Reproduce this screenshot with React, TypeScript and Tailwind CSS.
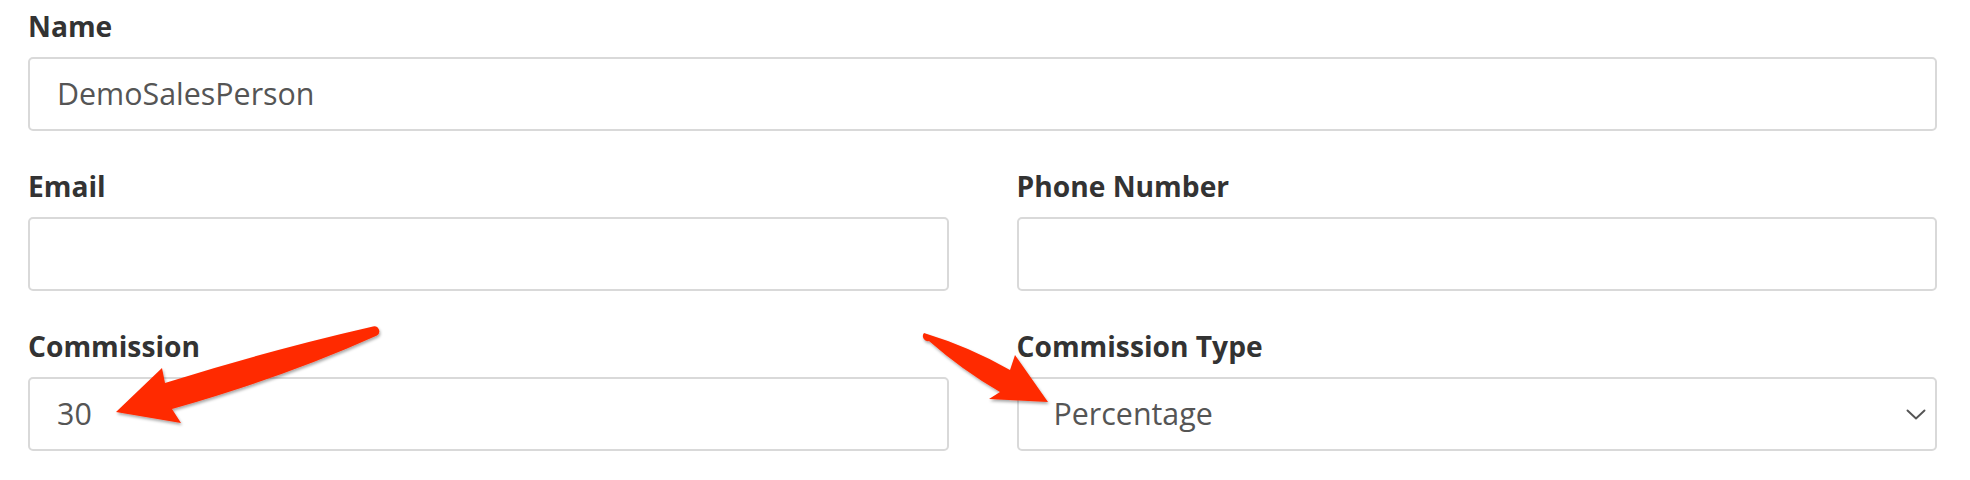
import React from "react";

function Label({ children }: { children: React.ReactNode }) {
  return (
    <div className="text-[28.2px] leading-[38px] font-bold text-[#333333] mb-[12px]">
      {children}
    </div>
  );
}

function Field({ value }: { value?: string }) {
  return (
    <div className="h-[74px] border-2 border-[#d9d9d9] rounded-[5px] bg-white flex items-center pl-[27px] text-[30.4px] text-[#555555]">
      {value}
    </div>
  );
}

export default function App() {
  return (
    <div className="relative w-full h-[480px] bg-white font-['Open_Sans',sans-serif] overflow-hidden">
      <div className="pl-[28px] pr-[33px] pt-[7px] flex flex-col gap-[36px]">
        <div>
          <Label>Name</Label>
          <Field value="DemoSalesPerson" />
        </div>
        <div className="grid grid-cols-2 gap-x-[68px]">
          <div>
            <Label>Email</Label>
            <Field />
          </div>
          <div>
            <Label>Phone Number</Label>
            <Field />
          </div>
        </div>
        <div className="grid grid-cols-2 gap-x-[68px]">
          <div>
            <Label>Commission</Label>
            <Field value="30" />
          </div>
          <div>
            <Label>Commission Type</Label>
            <div className="h-[74px] border-2 border-[#d9d9d9] rounded-[5px] bg-white flex items-center justify-between pl-[35px] pr-[9px] text-[30.4px] text-[#555555]">
              <span>Percentage</span>
              <svg width="20" height="11" viewBox="0 0 20 11" className="mt-[1px]">
                <polyline points="1.5,1.5 10,9.5 18.5,1.5" fill="none" stroke="#555555" strokeWidth="1.9" strokeLinecap="round" strokeLinejoin="round" />
              </svg>
            </div>
          </div>
        </div>
      </div>

      <svg
        className="absolute inset-0 pointer-events-none"
        width="1970"
        height="480"
        viewBox="0 0 1970 480"
      >
        <defs>
          <filter id="sh" x="-20%" y="-20%" width="140%" height="140%">
            <feDropShadow dx="1" dy="2" stdDeviation="1.4" floodColor="#000000" floodOpacity="0.35" />
          </filter>
        </defs>
        <path
          d="M 373,326.5 Q 270,350 165,383 L 162,368 L 116,412 L 181,423 L 172,409 Q 285,377 377,335.5 A 5 5 0 0 0 373,326.5 Z"
          fill="#ff2a00"
          filter="url(#sh)"
        />
        <path
          d="M 924,333 Q 970,347 1010,370 L 1015,355 L 1048,402 L 989,399 L 1000,392 Q 962,370 929,341 A 5 5 0 0 1 924,333 Z"
          fill="#ff2a00"
          filter="url(#sh)"
        />
      </svg>
    </div>
  );
}
